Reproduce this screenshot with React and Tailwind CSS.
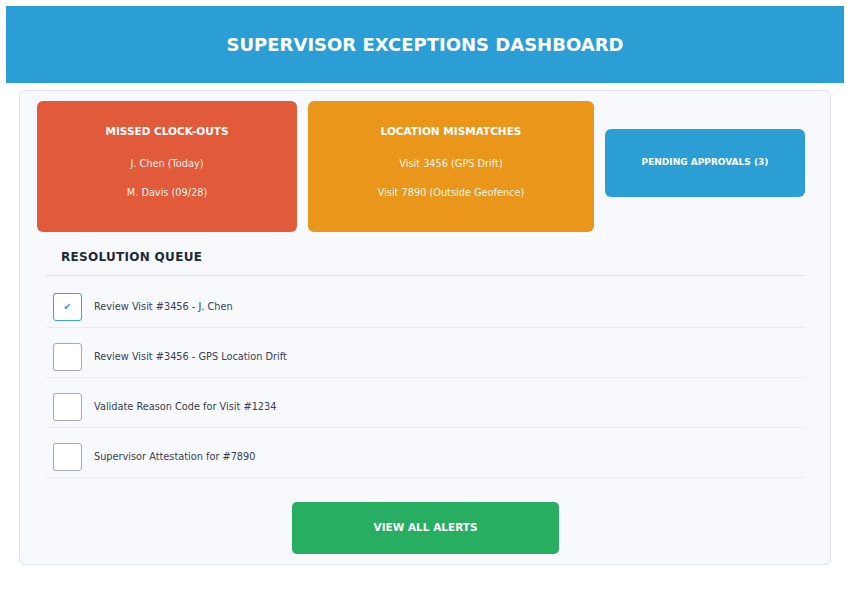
import React from "react";

const font = { fontFamily: '"DejaVu Sans", "Liberation Sans", sans-serif' };

const tasks = [
  { label: "Review Visit #3456 - J. Chen", done: true },
  { label: "Review Visit #3456 - GPS Location Drift", done: false },
  { label: "Validate Reason Code for Visit #1234", done: false },
  { label: "Supervisor Attestation for #7890", done: false },
];

function Card({ title, lines, className }) {
  return (
    <div className={`h-[131px] rounded-[6px] flex flex-col items-center pt-[22px] text-white ${className}`}>
      <div className="text-[10.5px] font-bold leading-[16px] mb-[17px]">{title}</div>
      {lines.map((l, i) => (
        <div key={i} className="text-[9.75px] leading-[16px] mb-[13px] text-white/95">
          {l}
        </div>
      ))}
    </div>
  );
}

export default function App() {
  return (
    <div className="w-[850px] h-[591px] bg-white p-[6px]" style={font}>
      <div className="h-[77px] bg-[#2b9fd5] flex items-center justify-center">
        <h1 className="text-white text-[18px] font-bold leading-none">SUPERVISOR EXCEPTIONS DASHBOARD</h1>
      </div>
      <div className="mx-[13px] mt-[7px] border border-[#dfe3ea] rounded-[6px] bg-[#f7f9fc] pl-[17px] pr-[25px] pt-[10px] pb-[10px]">
        <div className="flex items-start">
          <Card
            className="w-[260px] bg-[#e15a3a]"
            title="MISSED CLOCK-OUTS"
            lines={["J. Chen (Today)", "M. Davis (09/28)"]}
          />
          <Card
            className="w-[286px] ml-[11px] bg-[#e9961a]"
            title="LOCATION MISMATCHES"
            lines={["Visit 3456 (GPS Drift)", "Visit 7890 (Outside Geofence)"]}
          />
          <div className="w-[200px] h-[68px] ml-[11px] mt-[28px] rounded-[6px] bg-[#2b9fd5] flex items-center justify-center text-white text-[9px] font-bold">
            PENDING APPROVALS (3)
          </div>
        </div>
        <div className="ml-[8px]">
          <div className="mt-[17px] pl-[16px] pb-[10px] border-b-[1.5px] border-[#dde1e8]">
            <h2 className="text-[12px] tracking-[0.3px] font-bold leading-[16px] text-[#1e293b]">RESOLUTION QUEUE</h2>
          </div>
          <div className="mt-[2px]">
            {tasks.map((t, i) => (
              <div key={i} className="flex items-center pt-[15px] pb-[6px] pl-[8px] border-b border-[#e9edf2]">
                <div
                  className={`w-[29px] h-[28px] rounded-[3px] bg-white border-[1.5px] flex items-center justify-center ${
                    t.done ? "border-[#3aa3d9]" : "border-[#a7aab1]"
                  }`}
                >
                  {t.done && <span className="text-[#2b9fd5] text-[10px] leading-none">✔</span>}
                </div>
                <span className="ml-[12px] text-[9.75px] text-[#374151]">{t.label}</span>
              </div>
            ))}
          </div>
        </div>
        <div className="flex justify-center mt-[24px] pl-[9px]">
          <div className="w-[267px] h-[52px] rounded-[5px] bg-[#27ae60] flex items-center justify-center text-white text-[10.5px] font-bold">
            VIEW ALL ALERTS
          </div>
        </div>
      </div>
    </div>
  );
}
